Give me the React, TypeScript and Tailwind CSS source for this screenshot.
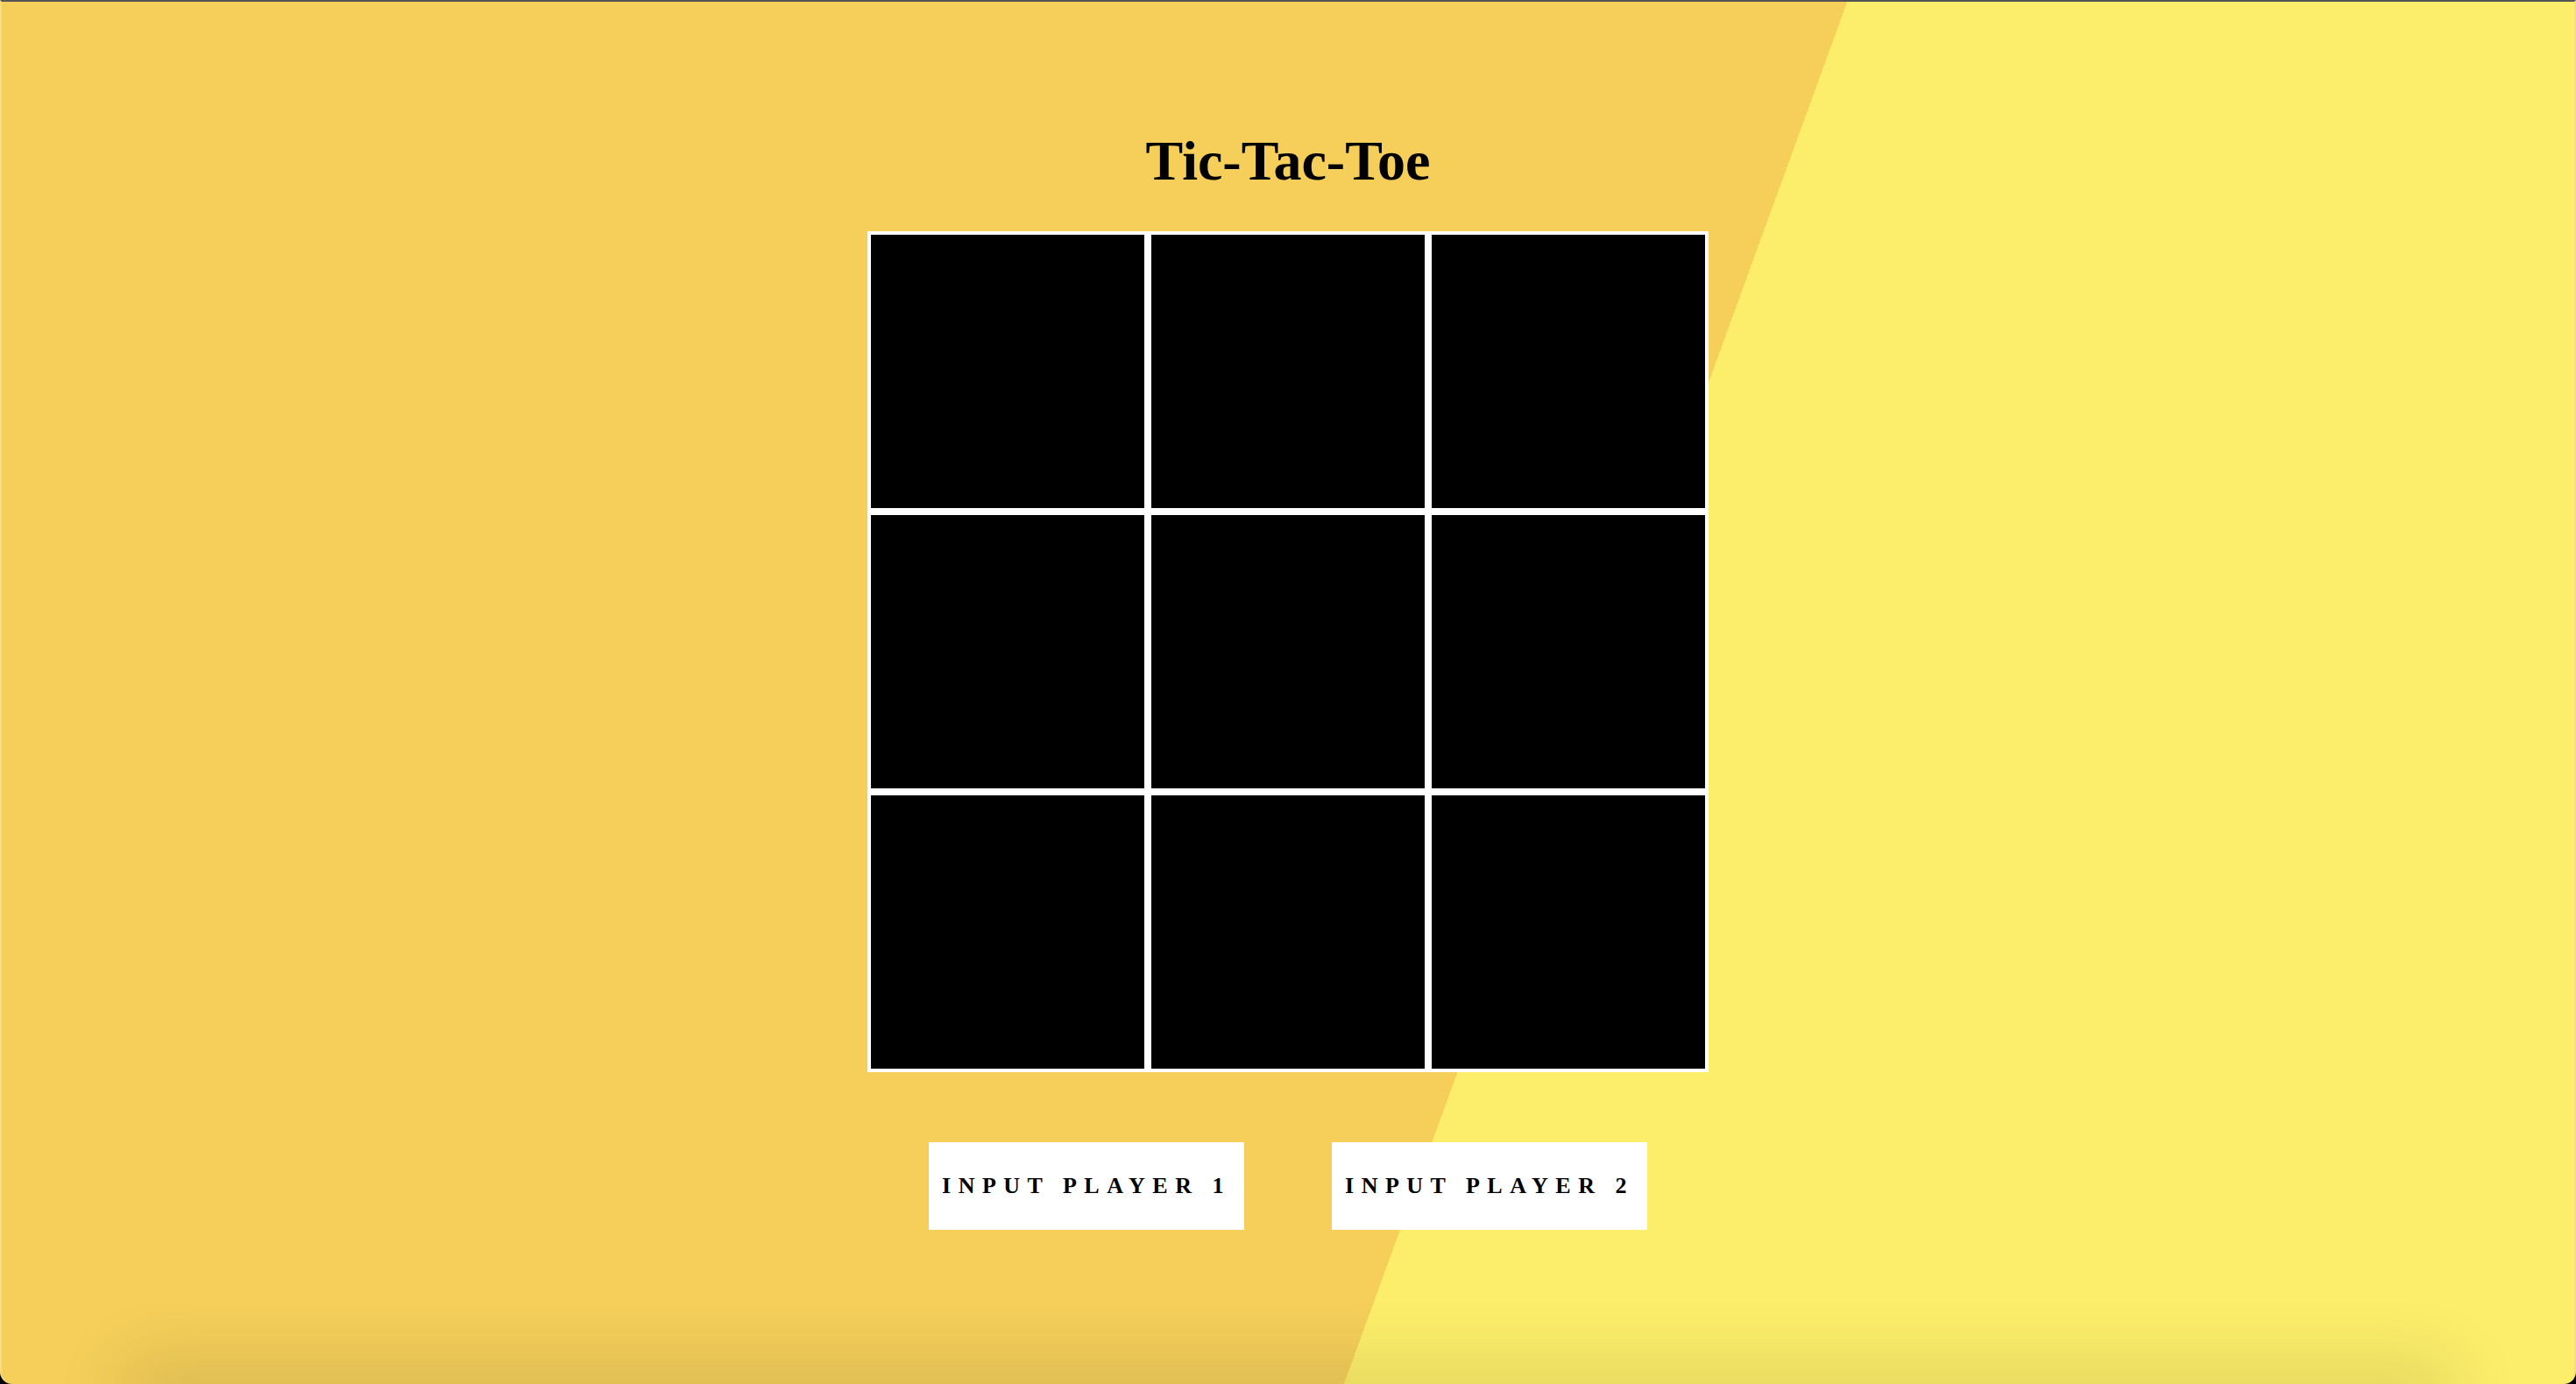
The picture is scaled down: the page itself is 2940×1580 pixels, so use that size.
import React, { useState } from 'react';

type Cell = 'X' | 'O' | null;

const Square = ({ value, onClick }: { value: Cell; onClick: () => void }) => (
  <button
    onClick={onClick}
    className="w-[320px] h-[320px] bg-black border-4 border-white flex items-center justify-center text-white text-[160px] font-bold leading-none"
  >
    {value}
  </button>
);

const PlayerButton = ({ label }: { label: string }) => (
  <button className="w-[360px] h-[100px] bg-white flex items-center justify-center text-black text-[26px] font-bold leading-none tracking-[8.5px]">
    {label}
  </button>
);

export default function App() {
  const [board, setBoard] = useState<Cell[]>(Array(9).fill(null));
  const [xNext, setXNext] = useState(true);

  const handleClick = (i: number) => {
    if (board[i]) return;
    const next = board.slice();
    next[i] = xNext ? 'X' : 'O';
    setBoard(next);
    setXNext(!xNext);
  };

  return (
    <div className="w-full h-[1580px] bg-black">
      <div
        className="relative w-full h-full overflow-hidden rounded-b-[14px] border-t-2 border-t-[#545454] border-x-2 border-x-[#f8dc84] bg-[linear-gradient(110deg,#f5cf5a_60%,#fcee6a_60%)]"
        style={{ fontFamily: '"Liberation Serif", "Times New Roman", serif' }}
      >
        <div className="flex flex-col items-center pt-[150px]">
          <h1 className="text-[64px] font-bold leading-none text-black">Tic-Tac-Toe</h1>

          <div className="mt-[48px] grid grid-cols-3">
            {board.map((v, i) => (
              <Square key={i} value={v} onClick={() => handleClick(i)} />
            ))}
          </div>

          <div className="mt-[80px] flex gap-[100px]">
            <PlayerButton label="INPUT PLAYER 1" />
            <PlayerButton label="INPUT PLAYER 2" />
          </div>
        </div>

        {/* soft shadow along the bottom edge */}
        <div className="pointer-events-none absolute left-[160px] right-[160px] top-full h-[20px] shadow-[0_0_80px_24px_rgba(0,0,0,0.12)]" />
      </div>
    </div>
  );
}
